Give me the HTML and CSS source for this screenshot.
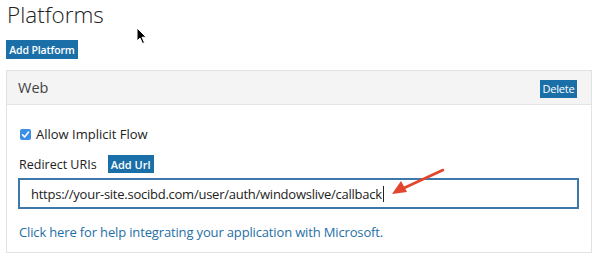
FILE: index.html
```html
<!DOCTYPE html>
<html>
<head>
<meta charset="utf-8">
<link rel="stylesheet" href="styles.css">
</head>
<body>
<div class="page">
  <h1 class="title">Platforms</h1>
  <div class="toolbar"><button class="btn btn-add-platform">Add Platform</button></div>
  <div class="panel">
    <div class="panel-head">
      <span class="panel-title">Web</span>
      <button class="btn btn-delete">Delete</button>
    </div>
    <div class="panel-body">
      <label class="check-row">
        <span class="checkbox"><svg width="11" height="11" viewBox="0 0 11 11"><path d="M2.5 5.8 L4.6 8 L8.6 3" fill="none" stroke="#fff" stroke-width="1.6" stroke-linecap="round" stroke-linejoin="round"/></svg></span>
        <span class="check-label">Allow Implicit Flow</span>
      </label>
      <div class="uri-row">
        <span class="uri-label">Redirect URIs</span>
        <button class="btn btn-add-url">Add Url</button>
      </div>
      <div class="url-input"><span class="url-text">https://your-site.socibd.com/user/auth/windowslive/callback</span><span class="caret"></span></div>
      <a class="help-link" href="#">Click here for help integrating your application with Microsoft.</a>
    </div>
  </div>
  <svg class="arrow" width="60" height="34" viewBox="0 0 60 34"><line x1="53" y1="3" x2="14" y2="21" stroke="#e2452b" stroke-width="2.6" stroke-linecap="round"/><polygon points="2,27 11,14 17,25" fill="#e2452b"/></svg>
  <svg class="pointer" width="12" height="18" viewBox="0 0 12 18"><path d="M1 1 L1 14 L4 11 L6.5 16.5 L8.5 15.6 L6 10.2 L10.2 10.2 Z" fill="#000" stroke="#fff" stroke-width="1"/></svg>
</div>
</body>
</html>
```

FILE: styles.css
```css
* { box-sizing: border-box; }
html, body { margin: 0; padding: 0; background: #fff; }
body { font-family: "Open Sans", "Noto Sans", sans-serif; color: #333; }
.page { position: relative; width: 600px; height: 262px; padding: 0 8px 0 6px; }
.title {
  margin: 0; font-family: "Open Sans", sans-serif;
  font-weight: 300; font-size: 22.5px; line-height: 30px; color: #222;
  height: 40px; padding-left: 1px;
}
.toolbar { display: flex; height: 19px; }
.btn {
  border: none; background: #1b6fa8; color: #fff;
  font-family: "Open Sans", sans-serif; font-weight: 600;
  padding: 0; cursor: pointer; display: inline-flex; align-items: center; justify-content: center;
  white-space: nowrap;
}
.btn-add-platform { width: 72px; height: 19px; font-size: 10.5px; letter-spacing: -0.15px; }
.panel {
  margin-top: 11px; width: 586px; height: 183px;
  border: 1px solid #e2e2e2; background: #fff;
}
.panel-head {
  height: 34px; background: #f4f4f4; border-bottom: 1px solid #e4e4e4;
  display: flex; align-items: center; justify-content: space-between;
  padding: 0 14px 0 11px;
}
.panel-title { font-size: 14.5px; color: #444; font-weight: 400; }
.btn-delete { width: 37px; height: 18px; font-size: 11px; font-weight: 400; margin-top: 2px; letter-spacing: -0.2px; }
.panel-body { padding: 21px 0 0 11px; }
.check-row { display: flex; align-items: center; gap: 5px; height: 16px; }
.checkbox {
  width: 11px; height: 11px; border-radius: 2px; background: #3a8ee6;
  display: inline-flex; align-items: center; justify-content: center;
  margin-left: 2px;
}
.check-label { font-size: 13px; color: #222; }
.uri-row { display: flex; align-items: center; margin-top: 12px; height: 20px; }
.uri-label { font-size: 12.5px; color: #222; margin-left: 1px; }
.btn-add-url { width: 46px; height: 18px; font-size: 11px; margin-left: 11px; }
.url-input {
  width: 561px; height: 31px; margin-top: 4px;
  border: 2px solid #3d78a8; display: flex; align-items: center;
  padding-left: 11px; font-size: 13px; letter-spacing: -0.25px; color: #222;
}
.caret { display: inline-block; width: 1px; height: 16px; background: #222; margin-left: 1px; }
.arrow { position: absolute; left: 390px; top: 167px; }
.help-link {
  display: block; margin-top: 13px; font-size: 13px; letter-spacing: -0.15px; line-height: 20px;
  color: #1f6fa6; text-decoration: none; margin-left: 1px;
}
.pointer { position: absolute; left: 136px; top: 27px; }
```
